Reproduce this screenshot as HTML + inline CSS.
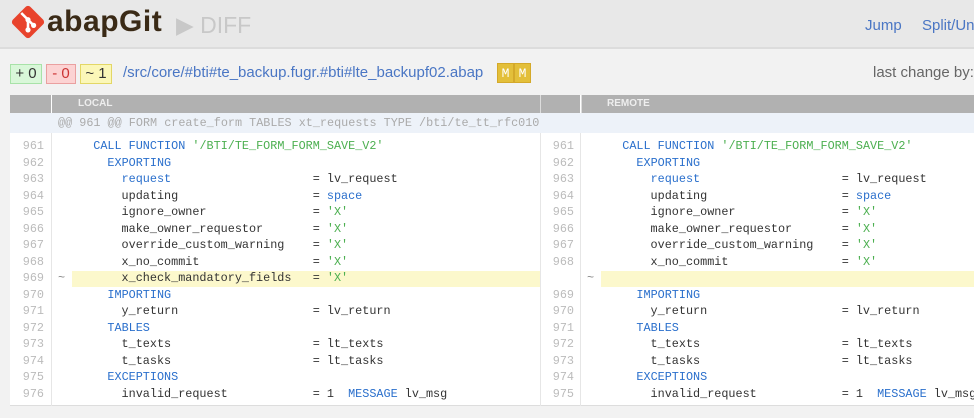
<!DOCTYPE html>
<html><head><meta charset="utf-8"><style>
*{margin:0;padding:0;box-sizing:border-box}
body{width:974px;height:418px;overflow:hidden;background:#f2f2f2;font-family:"Liberation Sans",sans-serif;position:relative}
.hdr{position:absolute;left:0;top:0;width:974px;height:49px;background:#e8e8e8;border-bottom:2px solid #dcdcdc}
.logo{position:absolute;left:10px;top:4px}
.brand{position:absolute;left:47px;top:5px;font:bold 30px "Liberation Sans",sans-serif;color:#3a2a16;letter-spacing:0.5px}
.diff{position:absolute;left:176px;top:12px;font-size:23px;color:#c8c8c8;white-space:nowrap}
.nav{position:absolute;top:17px;font-size:15px;color:#4a76c4;white-space:nowrap}
.badge{position:absolute;top:64px;height:20px;font-size:15px;line-height:18px;text-align:center;border:1px solid}
.path{position:absolute;left:123px;top:64px;font-size:15px;color:#4a76c4;white-space:nowrap}
.m{position:absolute;top:63px;width:17px;height:20px;background:#e3bf3a;border:1px solid #d4a92a;color:#fff;font:13px "Liberation Mono",monospace;line-height:19px;text-align:center}
.lc{position:absolute;left:873px;top:64px;font-size:15px;color:#666;white-space:nowrap}
.tbl{position:absolute;left:10px;top:95px;width:970px;height:311px;background:#fff;border-bottom:1px solid #ddd}
.th{position:absolute;top:0;height:18px;background:#b1b1b1;color:#eee;font:bold 10px "Liberation Sans",sans-serif;line-height:18px}
.hunk{position:absolute;left:0;top:18px;width:970px;height:20px;background:#edf2f9;color:#aaa;font:11.8px "Liberation Mono",monospace;line-height:20px}
.row{position:absolute;height:16.5px;font:11.8px "Liberation Mono",monospace;line-height:16.5px;white-space:pre;color:#333}
.n{position:absolute;width:34px;text-align:right;color:#bbb}
.k{color:#2a6fcc}.s{color:#4caf50}
.hl{position:absolute;background:#fcf8cc;height:16.5px}
.vl{position:absolute;top:38px;height:273px;width:1px;background:#e6e6e6}
</style></head><body>
<div class="hdr">
<svg class="logo" width="36" height="36" viewBox="0 0 32 32"><rect x="5" y="5" width="22" height="22" rx="3" transform="rotate(45 16 16)" fill="#e8432c"/><g stroke="#fff" stroke-width="2.3" fill="none"><path d="M10 8 L16 14 L16 23 M16 14 L21 19"/></g><circle cx="16" cy="14" r="2.3" fill="#fff"/><circle cx="16" cy="23" r="2.3" fill="#fff"/><circle cx="21" cy="19" r="2.3" fill="#fff"/></svg>
<div class="brand">abapGit</div>
<div class="diff">▶ DIFF</div>
<div class="nav" style="left:865px">Jump</div>
<div class="nav" style="left:922px">Split/Unified</div>
</div>
<div class="badge" style="left:10px;width:32px;background:#d9f7d9;border-color:#a8e2a8;color:#333">+ 0</div>
<div class="badge" style="left:46px;width:30px;background:#fcd3d3;border-color:#eaa0a0;color:#c33">- 0</div>
<div class="badge" style="left:80px;width:32px;background:#fbf7b8;border-color:#e3d766;color:#333">~ 1</div>
<div class="path">/src/core/#bti#te_backup.fugr.#bti#lte_backupf02.abap</div>
<div class="m" style="left:497px">M</div><div class="m" style="left:514px">M</div>
<div class="lc">last change by:</div>
<div class="tbl">
<div class="th" style="left:0;width:41px"></div>
<div class="th" style="left:42px;width:488px;padding-left:26px">LOCAL</div>
<div class="th" style="left:530px;width:40px;border-left:1px solid #ddd"></div>
<div class="th" style="left:571px;width:400px;border-left:1px solid #ddd;padding-left:25px">REMOTE</div>
<div class="hunk"><span style="padding-left:48px">@@ 961 @@ FORM create_form TABLES xt_requests TYPE /bti/te_tt_rfc010</span></div>
<div class="vl" style="left:41px"></div><div class="vl" style="left:530px"></div><div class="vl" style="left:570px"></div>
</div>
<div class="hl" style="left:72px;top:270.5px;width:468px"></div>
<div class="hl" style="left:601px;top:270.5px;width:373px"></div>
<div id="rows"></div>
<script>
var L=[
["961","   <span class=k>CALL FUNCTION</span> <span class=s>'/BTI/TE_FORM_FORM_SAVE_V2'</span>","961"],
["962","     <span class=k>EXPORTING</span>","962"],
["963","       <span class=k>request</span>                    = lv_request","963"],
["964","       updating                   = <span class=k>space</span>","964"],
["965","       ignore_owner               = <span class=s>'X'</span>","965"],
["966","       make_owner_requestor       = <span class=s>'X'</span>","966"],
["967","       override_custom_warning    = <span class=s>'X'</span>","967"],
["968","       x_no_commit                = <span class=s>'X'</span>","968"],
["969","       x_check_mandatory_fields   = <span class=s>'X'</span>","",1],
["970","     <span class=k>IMPORTING</span>","969"],
["971","       y_return                   = lv_return","970"],
["972","     <span class=k>TABLES</span>","971"],
["973","       t_texts                    = lt_texts","972"],
["974","       t_tasks                    = lt_tasks","973"],
["975","     <span class=k>EXCEPTIONS</span>","974"],
["976","       invalid_request            = 1  <span class=k>MESSAGE</span> lv_msg","975"]];
var h="";
L.forEach(function(r,i){var t=138+i*16.5;
h+='<div class="row" style="left:10px;top:'+t+'px"><span class=n style="left:0">'+r[0]+'</span></div>';
h+='<div class="row" style="left:72px;top:'+t+'px">'+r[1]+'</div>';
h+='<div class="row" style="left:540px;top:'+t+'px"><span class=n style="left:0">'+r[2]+'</span></div>';
if(!r[3])h+='<div class="row" style="left:601px;top:'+t+'px">'+r[1]+'</div>';
else{h+='<div class="row" style="left:58px;top:'+t+'px;color:#888">~</div><div class="row" style="left:587px;top:'+t+'px;color:#888">~</div>';}
});
document.getElementById('rows').innerHTML=h;
</script>
</body></html>
